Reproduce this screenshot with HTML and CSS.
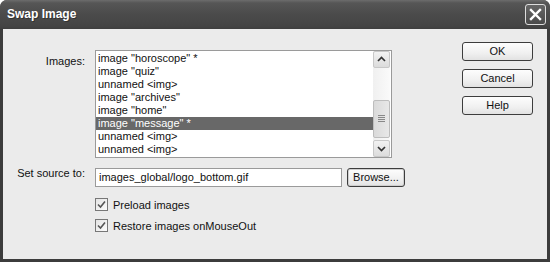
FILE: index.html
```html
<!DOCTYPE HTML>
<html lang="en">
<head>
<meta charset="utf-8"/>
<title>Swap Image</title>
<link rel="stylesheet" href="styles.css">
</head>
<body>
<div class="dialog">
  <div class="titlebar">
    <span class="title">Swap Image</span>
    <span class="closebtn">
      <svg width="21" height="21" viewBox="0 0 21 21">
        <path d="M6 6 L15 15 M15 6 L6 15" stroke="#fff" stroke-width="2.4" stroke-linecap="square"/>
      </svg>
    </span>
  </div>
  <div class="body">
    <div class="form">
      <div class="label label-top">Images:</div>
      <div class="listbox">
        <div class="rows">
          <div class="row">image "horoscope" *</div>
          <div class="row">image "quiz"</div>
          <div class="row">unnamed &lt;img&gt;</div>
          <div class="row">image "archives"</div>
          <div class="row">image "home"</div>
          <div class="row selected">image "message" *</div>
          <div class="row">unnamed &lt;img&gt;</div>
          <div class="row">unnamed &lt;img&gt;</div>
        </div>
        <div class="scrollbar">
          <div class="sbtn">
            <svg width="15" height="15" viewBox="0 0 15 15"><path d="M4 9 L7.5 5.5 L11 9" fill="none" stroke="#333" stroke-width="1.7"/></svg>
          </div>
          <div class="track">
            <div class="thumb">
              <svg width="7" height="8" viewBox="0 0 7 8"><path d="M0 .5 H7 M0 2.5 H7 M0 4.5 H7 M0 6.5 H7" stroke="#888" stroke-width="1"/></svg>
            </div>
          </div>
          <div class="sbtn">
            <svg width="15" height="15" viewBox="0 0 15 15"><path d="M4 6 L7.5 9.5 L11 6" fill="none" stroke="#333" stroke-width="1.7"/></svg>
          </div>
        </div>
      </div>

      <div class="label">Set source to:</div>
      <div class="source">
        <div class="field">images_global/logo_bottom.gif</div>
        <div class="button browse">Browse...</div>
      </div>

      <div></div>
      <div class="checks">
        <div class="check">
          <span class="box"><svg width="11" height="11" viewBox="0 0 11 11"><path d="M2 5.5 L4.5 8 L9 2.5" fill="none" stroke="#555" stroke-width="1.6"/></svg></span>
          Preload images
        </div>
        <div class="check">
          <span class="box"><svg width="11" height="11" viewBox="0 0 11 11"><path d="M2 5.5 L4.5 8 L9 2.5" fill="none" stroke="#555" stroke-width="1.6"/></svg></span>
          Restore images onMouseOut
        </div>
      </div>
    </div>

    <div class="actions">
      <div class="button">OK</div>
      <div class="button">Cancel</div>
      <div class="button">Help</div>
    </div>
  </div>
</div>
</body>
</html>
```

FILE: styles.css
```css
body {
  margin: 0;
  background: #fff;
  font-family: "Liberation Sans", Arial, sans-serif;
  font-size: 11px;
  color: #111;
}

.dialog {
  width: 550px;
  height: 262px;
  box-sizing: border-box;
  display: flex;
  flex-direction: column;
  background: #3c3c3c;
  border-radius: 7px 7px 0 0;
  padding: 0 3px 3px 3px;
}

.titlebar {
  height: 29px;
  margin: 0 -3px;
  padding: 0 4px 0 7px;
  display: flex;
  align-items: center;
  justify-content: space-between;
  border-radius: 7px 7px 0 0;
  background: linear-gradient(#6c6c6c 0px, #565656 3px, #4b4b4b 14px, #444 26px, #3e3e3e 29px);
}

.title {
  color: #fff;
  font-weight: bold;
  font-size: 12px;
  margin-top: -1px;
  text-shadow: 1px 1px 0 #333;
}

.closebtn {
  width: 21px;
  height: 21px;
  margin-top: -1px;
  box-sizing: border-box;
  border: 1px solid #ddd;
  border-radius: 3px;
  background: linear-gradient(#666, #4a4a4a);
  display: flex;
  align-items: center;
  justify-content: center;
}

.closebtn svg { margin: -1px; }

.body {
  flex: 1;
  display: flex;
  background: #ebebeb;
}

.form {
  display: grid;
  grid-template-columns: 82px auto;
  column-gap: 10px;
  align-content: start;
  align-items: center;
  padding-top: 21px;
}

.label {
  text-align: right;
}

.label-top {
  align-self: start;
  padding-top: 5px;
}

.listbox {
  width: 297px;
  height: 108px;
  box-sizing: border-box;
  border: 1px solid #9a9a9a;
  background: #fff;
  display: flex;
}

.rows {
  flex: 1;
  padding-top: 1px;
}

.row {
  height: 13px;
  line-height: 13px;
  padding-left: 2px;
  white-space: nowrap;
}

.row.selected {
  background: #686868;
  color: #fff;
}

.scrollbar {
  width: 17px;
  display: flex;
  flex-direction: column;
  background: #f3f3f3;
  margin-right: 1px;
}

.sbtn {
  height: 17px;
  box-sizing: border-box;
  border: 1px solid #c8c8c8;
  border-radius: 2px;
  background: linear-gradient(#f2f2f2, #dcdcdc);
  display: flex;
  align-items: center;
  justify-content: center;
}

.track {
  flex: 1;
  background: linear-gradient(90deg, #f0f0f0, #fafafa);
}

.thumb {
  margin-top: 32px;
  height: 38px;
  box-sizing: border-box;
  border: 1px solid #bdbdbd;
  border-radius: 2px;
  background: linear-gradient(90deg, #dadada, #e8e8e8);
  display: flex;
  align-items: center;
  justify-content: center;
}

.source {
  display: flex;
  gap: 5px;
  margin-top: 10px;
}

.field {
  width: 247px;
  height: 19px;
  box-sizing: border-box;
  border: 1px solid #9a9a9a;
  background: #fff;
  line-height: 17px;
  padding-left: 3px;
}

.button {
  width: 71px;
  height: 19px;
  box-sizing: border-box;
  border: 1px solid #3d3d3d;
  border-radius: 3px;
  background: linear-gradient(#fdfdfd, #f0f0f0 60%, #e2e2e2);
  text-align: center;
  line-height: 17px;
}

.button.browse {
  width: 58px;
  box-shadow: inset 0 0 0 1px #cfcfcf;
}

.checks {
  display: flex;
  flex-direction: column;
  gap: 8px;
  margin-top: 11px;
}

.check {
  display: flex;
  align-items: center;
  gap: 5px;
  height: 13px;
}

.box {
  width: 13px;
  height: 13px;
  box-sizing: border-box;
  border: 1px solid #777;
  background: linear-gradient(135deg, #e4e4e4, #fbfbfb);
  display: flex;
  align-items: center;
  justify-content: center;
}

.actions {
  margin-left: auto;
  margin-right: 14px;
  padding-top: 13px;
  display: flex;
  flex-direction: column;
  gap: 8px;
}
```
